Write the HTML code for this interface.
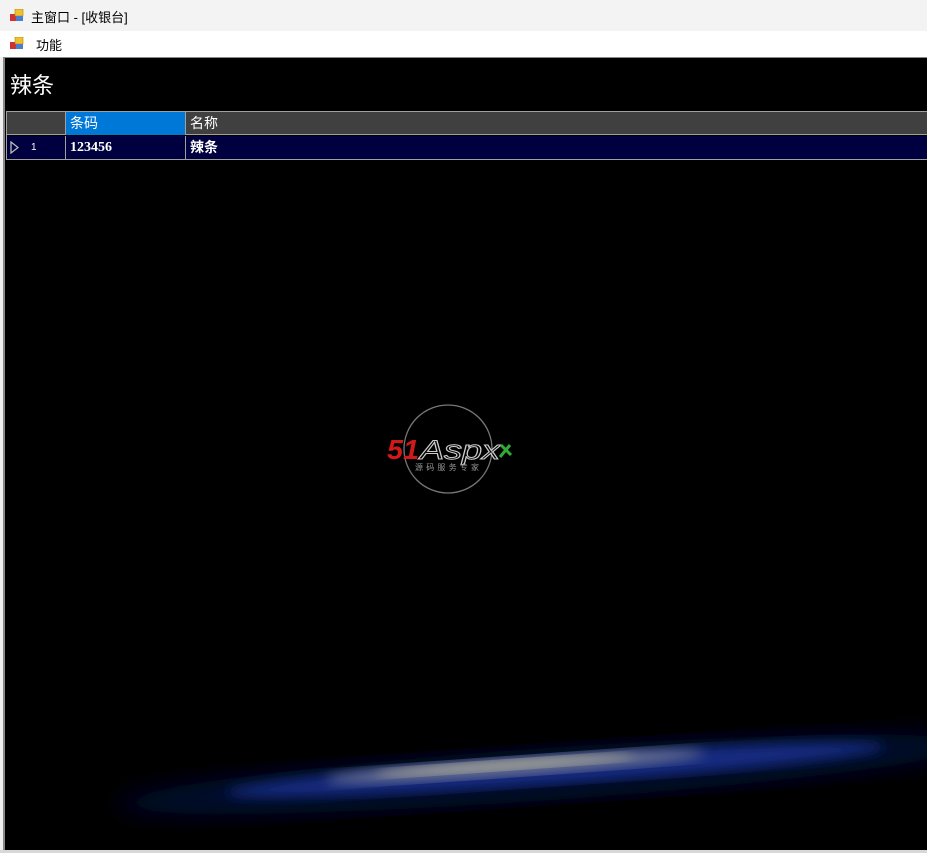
<!DOCTYPE html>
<html><head><meta charset="utf-8"><style>
*{margin:0;padding:0;box-sizing:border-box}
body{width:927px;height:853px;overflow:hidden;background:#f0f0f0;font-family:"Liberation Sans","Noto Sans CJK SC",sans-serif;position:relative}
.title{position:absolute;left:0;top:0;width:927px;height:31px;background:#f3f3f3;font-size:13px;color:#000}
.menu{position:absolute;left:0;top:31px;width:927px;height:26px;background:#fff;font-size:13px}
.ico{position:absolute;width:14px;height:13px}
.main{position:absolute;left:3px;top:57px;width:924px;height:793px;background:#000;border-left:2px solid #888;border-top:1px solid #888}
.bot{position:absolute;left:0;top:850px;width:927px;height:3px;background:#d8d8d8}
.cell{position:absolute;color:#fff;font-size:14px;line-height:23px;padding-left:4px;border-right:1px solid #a0a0a0}
</style></head><body>
<div class="title">
 <svg class="ico" style="left:10px;top:9px" viewBox="0 0 14 13"><rect x="0" y="5" width="6" height="7" fill="#c33"/><rect x="5" y="0" width="8" height="7" fill="#f0c030" stroke="#a80" stroke-width=".6"/><rect x="6" y="7" width="7" height="5" fill="#4a7fd0"/></svg>
 <span style="position:absolute;left:31px;top:7px">主窗口 - [收银台]</span>
</div>
<div class="menu">
 <svg class="ico" style="left:10px;top:6px" viewBox="0 0 14 13"><rect x="0" y="5" width="6" height="7" fill="#c33"/><rect x="5" y="0" width="8" height="7" fill="#f0c030" stroke="#a80" stroke-width=".6"/><rect x="6" y="7" width="7" height="5" fill="#4a7fd0"/></svg>
 <span style="position:absolute;left:36px;top:4px">功能</span>
</div>
<div class="main">
 <div style="position:absolute;left:5px;top:10px;color:#fff;font-size:22px">辣条</div>
 <div style="position:absolute;left:1px;top:53px;width:921px;height:49px;border:1px solid #a0a0a0;border-right:none">
  <div style="position:absolute;left:0;top:0;width:921px;height:23px;background:#404040;border-bottom:1px solid #a0a0a0"></div>
  <div class="cell" style="left:0;top:0;width:59px;height:23px"></div>
  <div class="cell" style="left:59px;top:0;width:120px;height:23px;background:#0078d7">条码</div>
  <div class="cell" style="left:179px;top:0;width:742px;height:23px;border:none">名称</div>
  <div style="position:absolute;left:0;top:24px;width:921px;height:23px;background:#000040"></div>
  <div class="cell" style="left:0;top:24px;width:59px;height:23px;font-size:10px;padding-left:24px">1</div>
  <svg style="position:absolute;left:3px;top:29px" width="9" height="13"><path d="M1 1 L8 6.5 L1 12 Z" fill="none" stroke="#bbb" stroke-width="1.3"/></svg>
  <div class="cell" style="left:59px;top:24px;width:120px;height:23px;font-weight:bold;font-family:'Liberation Serif',serif">123456</div>
  <div class="cell" style="left:179px;top:24px;width:742px;height:23px;font-weight:bold;border:none">辣条</div>
 </div>
 <svg style="position:absolute;left:376px;top:343px" width="140" height="100">
  <circle cx="67" cy="48" r="44" fill="none" stroke="#777" stroke-width="1.3"/>
  <text x="6" y="58" font-family="Liberation Sans" font-weight="bold" font-style="italic" font-size="28" fill="#d01a1a" textLength="32" lengthAdjust="spacingAndGlyphs">51</text>
  <text x="39" y="58" font-family="Liberation Sans" font-style="italic" font-size="27" fill="none" stroke="#ccc" stroke-width="1" textLength="80" lengthAdjust="spacingAndGlyphs">Aspx</text>
  <path d="M120 44 L130 54 M119 56 L129 44" stroke="#3a3" stroke-width="3"/>
  <text x="34" y="69" font-family="Noto Sans CJK SC" font-size="8" fill="#999" textLength="64">源码服务专家</text>
 </svg>
 <svg style="position:absolute;left:80px;top:645px" width="844" height="133">
  <defs><filter id="b"><feGaussianBlur stdDeviation="12"/></filter><filter id="c"><feGaussianBlur stdDeviation="6"/></filter></defs>
  <g transform="rotate(-4 450 60)">
   <ellipse cx="460" cy="72" rx="430" ry="26" fill="#050c30" filter="url(#b)"/>
   <ellipse cx="470" cy="68" rx="330" ry="14" fill="#122a80" filter="url(#c)"/>
   <ellipse cx="430" cy="62" rx="190" ry="9" fill="#6a7290" filter="url(#c)"/>
   <ellipse cx="420" cy="60" rx="130" ry="5" fill="#a8a898" filter="url(#c)"/>
  </g>
 </svg>
</div>
<div class="bot"></div>
</body></html>
